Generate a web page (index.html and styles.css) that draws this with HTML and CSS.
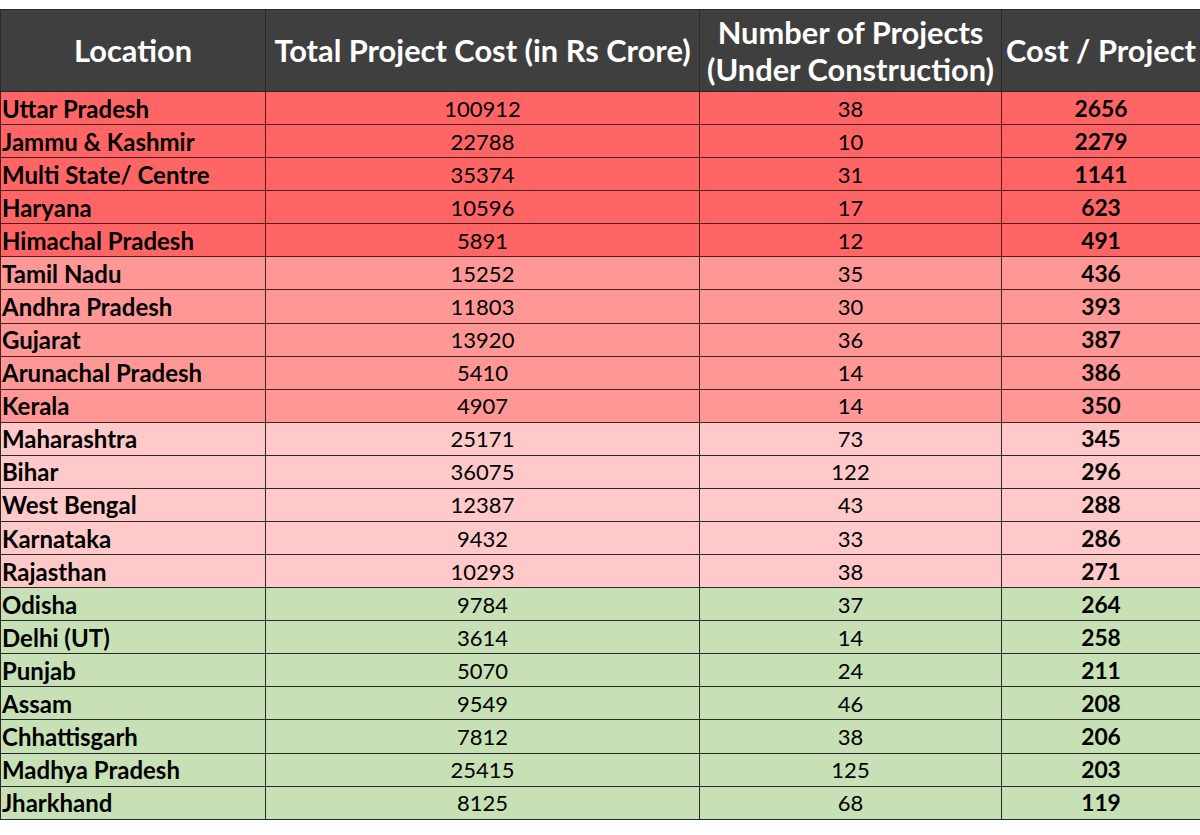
FILE: index.html
```html
<!DOCTYPE html>
<html>
<head>
<meta charset="utf-8">
<link rel="stylesheet" href="styles.css">
</head>
<body>
<div class="page">
<table class="grid">
  <colgroup>
    <col class="c1"><col class="c2"><col class="c3"><col class="c4">
  </colgroup>
  <thead>
    <tr class="head">
      <th>Location</th>
      <th class="nowrap">Total Project Cost (in Rs Crore)</th>
      <th class="two">Number of Projects<br>(Under Construction)</th>
      <th class="nowrap">Cost / Project</th>
    </tr>
  </thead>
  <tbody>
    <tr class="r1"><td>Uttar Pradesh</td><td>100912</td><td>38</td><td>2656</td></tr>
    <tr class="r1"><td>Jammu &amp; Kashmir</td><td>22788</td><td>10</td><td>2279</td></tr>
    <tr class="r1"><td>Multi State/ Centre</td><td>35374</td><td>31</td><td>1141</td></tr>
    <tr class="r1"><td>Haryana</td><td>10596</td><td>17</td><td>623</td></tr>
    <tr class="r1"><td>Himachal Pradesh</td><td>5891</td><td>12</td><td>491</td></tr>
    <tr class="r2"><td>Tamil Nadu</td><td>15252</td><td>35</td><td>436</td></tr>
    <tr class="r2"><td>Andhra Pradesh</td><td>11803</td><td>30</td><td>393</td></tr>
    <tr class="r2"><td>Gujarat</td><td>13920</td><td>36</td><td>387</td></tr>
    <tr class="r2"><td>Arunachal Pradesh</td><td>5410</td><td>14</td><td>386</td></tr>
    <tr class="r2"><td>Kerala</td><td>4907</td><td>14</td><td>350</td></tr>
    <tr class="r3"><td>Maharashtra</td><td>25171</td><td>73</td><td>345</td></tr>
    <tr class="r3"><td>Bihar</td><td>36075</td><td>122</td><td>296</td></tr>
    <tr class="r3"><td>West Bengal</td><td>12387</td><td>43</td><td>288</td></tr>
    <tr class="r3"><td>Karnataka</td><td>9432</td><td>33</td><td>286</td></tr>
    <tr class="r3"><td>Rajasthan</td><td>10293</td><td>38</td><td>271</td></tr>
    <tr class="r4"><td>Odisha</td><td>9784</td><td>37</td><td>264</td></tr>
    <tr class="r4"><td>Delhi (UT)</td><td>3614</td><td>14</td><td>258</td></tr>
    <tr class="r4"><td>Punjab</td><td>5070</td><td>24</td><td>211</td></tr>
    <tr class="r4"><td>Assam</td><td>9549</td><td>46</td><td>208</td></tr>
    <tr class="r4"><td>Chhattisgarh</td><td>7812</td><td>38</td><td>206</td></tr>
    <tr class="r4"><td>Madhya Pradesh</td><td>25415</td><td>125</td><td>203</td></tr>
    <tr class="r4"><td>Jharkhand</td><td>8125</td><td>68</td><td>119</td></tr>
  </tbody>
</table>
</div>
</body>
</html>
```

FILE: styles.css
```css
html, body {
  margin: 0;
  padding: 0;
  background: #ffffff;
}
.page {
  padding-top: 9px;
}
.grid {
  border-collapse: collapse;
  table-layout: fixed;
  width: 1200px;
  font-family: Lato, "Open Sans", sans-serif;
  color: #000;
}
.c1 { width: 265px; }
.c2 { width: 434px; }
.c3 { width: 302px; }
.c4 { width: 199px; }
.grid th, .grid td {
  border: 1px solid #2a2a2a;
  padding: 0;
  overflow: hidden;
}
.head {
  height: 82px;
  background: #3f3f3f;
}
.head th {
  color: #ffffff;
  font-weight: 700;
  font-size: 30.8px;
  line-height: 37px;
  text-align: center;
  vertical-align: middle;
  white-space: nowrap;
}
.head th.two {
  padding-top: 1px;
}
tbody tr {
  height: 33.09px;
}
tbody td {
  font-size: 22px;
  line-height: 31px;
  text-align: center;
  font-weight: 400;
  white-space: nowrap;
}
tbody td:first-child {
  text-align: left;
  font-weight: 700;
  font-size: 24px;
  padding-left: 1px;
}
tbody td:last-child {
  font-weight: 700;
  font-size: 22.8px;
}
.r1 { background: #ff6565; }
.r2 { background: #ff9797; }
.r3 { background: #ffc9c9; }
.r4 { background: #c7e0b5; }
.r1 td, .r2 td { border-color: #4a1f1f; }
```
